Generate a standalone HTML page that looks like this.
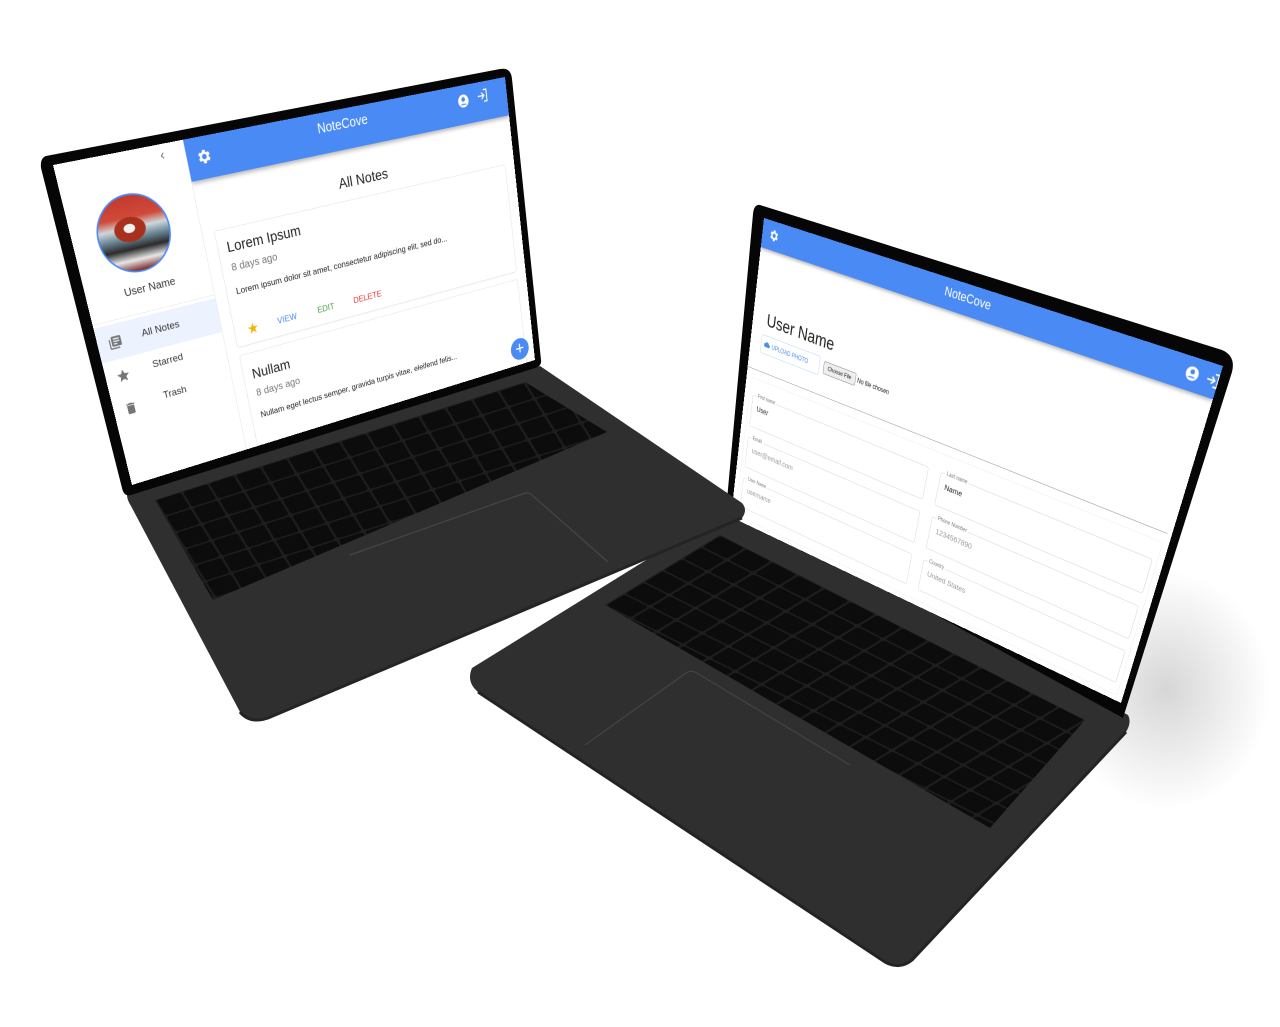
<!DOCTYPE html>
<html><head><meta charset="utf-8"><style>
html,body{margin:0;padding:0;background:#fff;width:1280px;height:1027px;overflow:hidden;font-family:"Liberation Sans",sans-serif;}
.abs{position:absolute;left:0;top:0;}
.scr{position:absolute;left:0;top:0;width:960px;height:600px;background:#fff;overflow:hidden;transform-origin:0 0;}
.t{position:absolute;white-space:nowrap;}
</style></head><body>

<!-- shadow -->
<div class="abs" style="left:1090px;top:560px;width:190px;height:260px;background:radial-gradient(ellipse at 40% 50%,rgba(0,0,0,0.16),rgba(0,0,0,0) 65%);"></div>

<!-- Laptop 2 shell -->
<svg class="abs" width="1280" height="1027" viewBox="0 0 1280 1027">
<defs>
<pattern id="k2" patternUnits="userSpaceOnUse" width="10" height="10" patternTransform="matrix(2.61,1.32,-1.92,1.17,720,535)">
<rect width="10" height="10" fill="#1e1e1e"/><rect x="0.4" y="0.4" width="9.2" height="9.2" rx="1" fill="#0c0c0c"/></pattern>
</defs>
<path d="M472,668 L735,505 L1128,715 Q1132,722 1126,732 L912,960 Q900,970 885,962 L478,692 Q466,682 472,668Z" fill="#2f2f2f"/>
<path d="M478,692 L885,962 Q900,970 912,960 L1126,732" fill="none" stroke="#232323" stroke-width="3"/>
<path d="M720,535 L1085,720 L990,828 L605,605Z" fill="url(#k2)"/>
<path d="M585,745 L686,673 Q690,670 695,672 L850,765" fill="none" stroke="#444" stroke-width="1.2"/>
<path d="M760,205 L1222,350 Q1236,356 1232,372 L1123,718 L727,500 L753,214 Q754,204 760,205Z" fill="#060606"/>
</svg>

<!-- Screen 2 -->
<div class="scr" style="transform:matrix3d(0.243885,0.084063,0,-0.00019153,0.10197,0.60935,0,0.00021472,0,0,1,0,764,218,0,1);">
  <div class="t" style="left:0;top:0;width:960px;height:52px;background:#4a8af4;box-shadow:0 3px 6px rgba(0,0,0,0.3);"></div>
  <svg class="t" style="left:16px;top:12px" width="26" height="26" viewBox="0 0 24 24"><path fill="#fff" d="M19.4 13a7.5 7.5 0 0 0 0-2l2.1-1.6-2-3.5-2.5 1a7 7 0 0 0-1.7-1L15 3h-4l-.4 2.7a7 7 0 0 0-1.7 1l-2.5-1-2 3.5L6.6 11a7.5 7.5 0 0 0 0 2l-2.1 1.6 2 3.5 2.5-1a7 7 0 0 0 1.7 1L11 21h4l.4-2.7a7 7 0 0 0 1.7-1l2.5 1 2-3.5zM13 15.5a3.5 3.5 0 1 1 0-7 3.5 3.5 0 0 1 0 7z"/></svg>
  <div class="t" style="left:0;width:960px;top:10px;text-align:center;color:#fff;font-size:22px;">NoteCove</div>
  <svg class="t" style="left:902px;top:12px" width="26" height="26" viewBox="0 0 24 24"><circle cx="12" cy="12" r="10" fill="#fff"/><circle cx="12" cy="9.5" r="3.5" fill="#4a8af4"/><path d="M5.5 18a8 5 0 0 1 13 0" fill="#4a8af4"/></svg>
  <svg class="t" style="left:938px;top:12px" width="26" height="26" viewBox="0 0 24 24"><path d="M10 17l5-5-5-5M15 12H3M14 3h6v18h-6" fill="none" stroke="#fff" stroke-width="2.2"/></svg>

  <div class="t" style="left:36px;top:160px;font-size:34px;color:#222;">User Name</div>
  <div class="t" style="left:28px;top:208px;width:150px;height:34px;border:1px solid #bcd3fb;border-radius:4px;"></div>
  <svg class="t" style="left:36px;top:218px" width="16" height="14" viewBox="0 0 24 18"><path d="M19 7a7 7 0 0 0-13-2A5.5 5.5 0 0 0 6 16h13a4.5 4.5 0 0 0 0-9z" fill="#4a8af4"/></svg>
  <div class="t" style="left:56px;top:219px;font-size:12px;color:#4a8af4;">UPLOAD PHOTO</div>
  <div class="t" style="left:190px;top:214px;width:78px;height:22px;background:#eee;border:1px solid #888;border-radius:3px;font-size:11px;line-height:22px;text-align:center;color:#111;">Choose File</div>
  <div class="t" style="left:274px;top:219px;font-size:12px;color:#111;">No file chosen</div>
  <div class="t" style="left:0;top:279px;width:952px;height:1px;background:#9a9a9a;"></div>
  <div class="t" style="left:12px;top:296px;width:935px;height:292px;border:1px solid #eee;border-radius:4px;"></div>

  <div class="t" style="left:22px;top:330px;width:443px;height:62px;border:1px solid #d6d6d6;border-radius:4px;"></div>
  <div class="t" style="left:32px;top:324px;font-size:10px;color:#777;background:#fff;padding:0 3px;">First name</div>
  <div class="t" style="left:36px;top:346px;font-size:15px;color:#222;">User</div>
  <div class="t" style="left:22px;top:417px;width:443px;height:62px;border:1px solid #d6d6d6;border-radius:4px;"></div>
  <div class="t" style="left:32px;top:411px;font-size:10px;color:#777;background:#fff;padding:0 3px;">Email</div>
  <div class="t" style="left:36px;top:433px;font-size:15px;color:#999;">user@email.com</div>
  <div class="t" style="left:22px;top:504px;width:443px;height:62px;border:1px solid #d6d6d6;border-radius:4px;"></div>
  <div class="t" style="left:32px;top:498px;font-size:10px;color:#777;background:#fff;padding:0 3px;">User Name</div>
  <div class="t" style="left:36px;top:520px;font-size:15px;color:#999;">username</div>

  <div class="t" style="left:495px;top:330px;width:443px;height:62px;border:1px solid #d6d6d6;border-radius:4px;"></div>
  <div class="t" style="left:505px;top:324px;font-size:10px;color:#777;background:#fff;padding:0 3px;">Last name</div>
  <div class="t" style="left:509px;top:346px;font-size:15px;color:#222;">Name</div>
  <div class="t" style="left:495px;top:417px;width:443px;height:62px;border:1px solid #d6d6d6;border-radius:4px;"></div>
  <div class="t" style="left:505px;top:411px;font-size:10px;color:#777;background:#fff;padding:0 3px;">Phone Number</div>
  <div class="t" style="left:509px;top:433px;font-size:15px;color:#999;">1234567890</div>
  <div class="t" style="left:495px;top:504px;width:443px;height:62px;border:1px solid #d6d6d6;border-radius:4px;"></div>
  <div class="t" style="left:505px;top:498px;font-size:10px;color:#777;background:#fff;padding:0 3px;">Country</div>
  <div class="t" style="left:509px;top:520px;font-size:15px;color:#999;">United States</div>
</div>

<!-- Laptop 1 shell -->
<svg class="abs" width="1280" height="1027" viewBox="0 0 1280 1027">
<defs>
<pattern id="k1" patternUnits="userSpaceOnUse" width="10" height="10" patternTransform="matrix(2.64,-0.84,1.0,1.63,155,500)">
<rect width="10" height="10" fill="#1e1e1e"/><rect x="0.4" y="0.4" width="9.2" height="9.2" rx="1" fill="#0c0c0c"/></pattern>
</defs>
<path d="M128,490 L540,366 L742,503 Q748,510 742,518 L268,718 Q250,724 240,712 L131,506 Q125,497 128,490Z" fill="#2f2f2f"/>
<path d="M742,518 L268,718 Q250,724 240,712" fill="none" stroke="#242424" stroke-width="3"/>
<path d="M155,500 L525,382 L607,432 L213,600Z" fill="url(#k1)"/>
<path d="M350,555 L525,493 Q530,492 533,496 L608,562" fill="none" stroke="#464646" stroke-width="1.2"/>
<path d="M46,156 L500,69 Q511,67 512,79 L541,360 Q542,366 535,368 L131,495 Q124,497 122,488 L41,168 Q40,158 46,156Z" fill="#060606"/>
</svg>

<!-- Screen 1 -->
<div class="scr" style="transform:matrix3d(0.56477,-0.077344,0,0.00018602,0.15550,0.62088,0,0.00018050,0,0,1,0,53,165,0,1);">
  <div class="t" style="left:245px;top:0;width:715px;height:75px;background:#4a8af4;box-shadow:0 4px 8px rgba(0,0,0,0.3);"></div>
  <svg class="t" style="left:262px;top:20px" width="32" height="32" viewBox="0 0 24 24"><path fill="#fff" d="M19.4 13a7.5 7.5 0 0 0 0-2l2.1-1.6-2-3.5-2.5 1a7 7 0 0 0-1.7-1L15 3h-4l-.4 2.7a7 7 0 0 0-1.7 1l-2.5-1-2 3.5L6.6 11a7.5 7.5 0 0 0 0 2l-2.1 1.6 2 3.5 2.5-1a7 7 0 0 0 1.7 1L11 21h4l.4-2.7a7 7 0 0 0 1.7-1l2.5 1 2-3.5zM13 15.5a3.5 3.5 0 1 1 0-7 3.5 3.5 0 0 1 0 7z"/></svg>
  <div class="t" style="left:473px;width:200px;top:14px;text-align:center;color:#fff;font-size:25px;">NoteCove</div>
  <svg class="t" style="left:838px;top:15px" width="30" height="30" viewBox="0 0 24 24"><circle cx="12" cy="12" r="10" fill="#fff"/><circle cx="12" cy="9.5" r="3.5" fill="#4a8af4"/><path d="M5.5 18a8 5 0 0 1 13 0" fill="#4a8af4"/></svg>
  <svg class="t" style="left:885px;top:12px" width="30" height="30" viewBox="0 0 24 24"><path d="M10 17l5-5-5-5M15 12H3M14 3h6v18h-6" fill="none" stroke="#fff" stroke-width="2"/></svg>

  <!-- sidebar -->
  <div class="t" style="left:0;top:0;width:244px;height:600px;background:#fff;border-right:1px solid #e4e4e4;"></div>
  <div class="t" style="left:196px;top:6px;font-size:24px;color:#666;">&#8249;</div>
  <div class="t" style="left:46px;top:72px;width:134px;height:134px;border-radius:50%;border:3px solid #4a8af4;overflow:hidden;background:linear-gradient(180deg,#c23a2e 0%,#d04a3a 28%,#cfd6dc 42%,#6e8a98 55%,#2b2b2b 70%,#e7e7e7 85%,#7a2a24 100%);"></div>
  <div class="t" style="left:80px;top:112px;width:60px;height:44px;border-radius:50%;background:#a8301f;"></div>
  <div class="t" style="left:98px;top:124px;width:22px;height:16px;border-radius:50%;background:#f2f2f2;"></div>
  <div class="t" style="left:0;width:245px;top:232px;text-align:center;font-size:20px;color:#333;">User Name</div>
  <div class="t" style="left:0;top:285px;width:245px;height:1px;background:#e6e6e6;"></div>
  <div class="t" style="left:0;top:292px;width:244px;height:66px;background:#edf3fe;"></div>
  <svg class="t" style="left:20px;top:312px" width="28" height="28" viewBox="0 0 24 24"><path d="M4 6H2v14a2 2 0 0 0 2 2h14v-2H4zm16-4H8a2 2 0 0 0-2 2v12a2 2 0 0 0 2 2h12a2 2 0 0 0 2-2V4a2 2 0 0 0-2-2zm-1 9H9V9h10zm-4 4H9v-2h6zm4-8H9V5h10z" fill="#757575"/></svg>
  <div class="t" style="left:40px;width:170px;top:312px;text-align:center;font-size:19px;color:#333;">All Notes</div>
  <svg class="t" style="left:20px;top:376px" width="28" height="28" viewBox="0 0 24 24"><path d="M12 17.3l6.2 3.7-1.6-7L22 9.2l-7.2-.6L12 2 9.2 8.6 2 9.2 7.5 14l-1.7 7z" fill="#757575"/></svg>
  <div class="t" style="left:40px;width:170px;top:374px;text-align:center;font-size:19px;color:#333;">Starred</div>
  <svg class="t" style="left:20px;top:440px" width="28" height="28" viewBox="0 0 24 24"><path d="M6 19a2 2 0 0 0 2 2h8a2 2 0 0 0 2-2V7H6zM19 4h-3.5l-1-1h-5l-1 1H5v2h14z" fill="#757575"/></svg>
  <div class="t" style="left:40px;width:170px;top:437px;text-align:center;font-size:19px;color:#333;">Trash</div>

  <!-- main -->
  <div class="t" style="left:450px;width:300px;top:120px;text-align:center;font-size:28px;color:#222;">All Notes</div>
  <div class="t" style="left:269px;top:170px;width:666px;height:224px;border:1px solid #e4e4e4;border-radius:5px;box-shadow:0 1px 3px rgba(0,0,0,0.08);"></div>
  <div class="t" style="left:288px;top:190px;font-size:27px;color:#222;">Lorem Ipsum</div>
  <div class="t" style="left:289px;top:233px;font-size:20px;color:#777;">8 days ago</div>
  <div class="t" style="left:289px;top:280px;font-size:17px;color:#222;">Lorem ipsum dolor sit amet, consectetur adipiscing elit, sed do...</div>
  <div class="t" style="left:296px;top:350px;font-size:28px;color:#f4b400;">&#9733;</div>
  <div class="t" style="left:362px;top:356px;font-size:17px;color:#4a8af4;">VIEW</div>
  <div class="t" style="left:452px;top:356px;font-size:17px;color:#43a047;">EDIT</div>
  <div class="t" style="left:535px;top:356px;font-size:17px;color:#e53935;">DELETE</div>

  <div class="t" style="left:269px;top:412px;width:666px;height:224px;border:1px solid #e4e4e4;border-radius:5px;box-shadow:0 1px 3px rgba(0,0,0,0.08);"></div>
  <div class="t" style="left:288px;top:440px;font-size:27px;color:#222;">Nullam</div>
  <div class="t" style="left:289px;top:483px;font-size:20px;color:#777;">8 days ago</div>
  <div class="t" style="left:289px;top:530px;font-size:17px;color:#222;">Nullam eget lectus semper, gravida turpis vitae, eleifend felis...</div>

  <div class="t" style="left:899px;top:541px;width:48px;height:48px;border-radius:50%;background:#4a8af4;color:#fff;font-size:40px;line-height:46px;text-align:center;">+</div>
</div>

</body></html>
